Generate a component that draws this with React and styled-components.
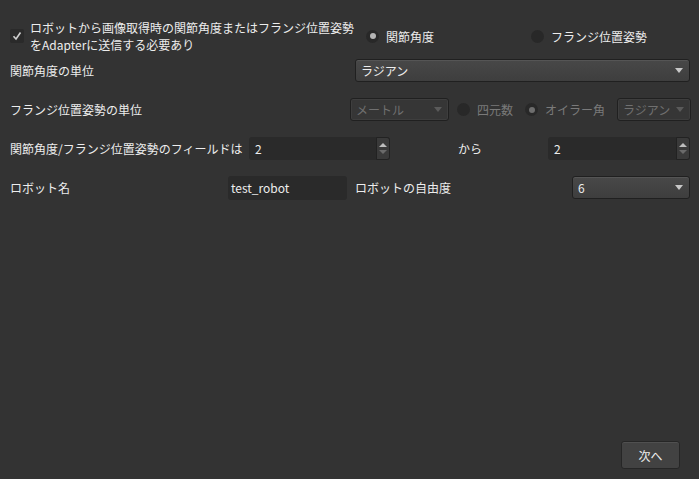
import React from "react";
import styled, { createGlobalStyle } from "styled-components";

const GlobalStyle = createGlobalStyle`
  html, body {
    margin: 0;
    padding: 0;
    background: #333333;
  }
  body {
    font-family: "Noto Sans CJK JP", "Noto Sans", sans-serif;
    font-size: 12px;
    color: #ededed;
  }
`;

const Page = styled.div`
  width: 699px;
  height: 479px;
  box-sizing: border-box;
  padding: 19px 9px 10px 10px;
  display: flex;
  flex-direction: column;
`;

const Row = styled.div`
  display: flex;
  align-items: center;
  height: ${(p) => p.h || 23}px;
  margin-bottom: ${(p) => p.mb || 16}px;
`;

const Label = styled.div`
  width: ${(p) => p.w}px;
  flex: none;
  box-sizing: border-box;
  padding-left: ${(p) => p.pl || 0}px;
  color: ${(p) => (p.disabled ? "#7a7a7a" : "#ededed")};
  white-space: nowrap;
`;

const CheckWrap = styled.div`
  width: 345px;
  flex: none;
  display: flex;
  align-items: center;
  gap: 6px;
`;

const CheckBox = styled.div`
  width: 14px;
  height: 14px;
  flex: none;
  background: #2a2a2a;
  border-radius: 2px;
  display: flex;
  align-items: center;
  justify-content: center;
`;

const CheckText = styled.div`
  line-height: 17px;
`;

const RadioItem = styled.div`
  display: flex;
  align-items: center;
  gap: 7px;
  width: ${(p) => (p.w ? `${p.w}px` : "auto")};
  flex: none;
  margin-left: ${(p) => p.ml || 0}px;
  color: ${(p) => (p.disabled ? "#7a7a7a" : "#ededed")};
  white-space: nowrap;
`;

const RadioDot = styled.div`
  width: 13px;
  height: 13px;
  border-radius: 50%;
  background: #282828;
  display: flex;
  align-items: center;
  justify-content: center;
  &::after {
    content: "";
    width: 6px;
    height: 6px;
    border-radius: 50%;
    background: ${(p) => (p.on ? (p.disabled ? "#6e6e6e" : "#b4b4b4") : "transparent")};
  }
`;

const Combo = styled.div`
  box-sizing: border-box;
  height: 23px;
  width: ${(p) => (p.w ? `${p.w}px` : "auto")};
  flex: ${(p) => (p.w ? "none" : "1")};
  margin-left: ${(p) => p.ml || 0}px;
  border: 1px solid #202020;
  border-radius: 3px;
  background: ${(p) =>
    p.disabled ? "#363636" : "linear-gradient(#484848, #3e3e3e)"};
  box-shadow: ${(p) =>
    p.disabled ? "inset 0 0 0 1px #3e3e3e" : "inset 0 1px 0 #555"};
  display: flex;
  align-items: center;
  justify-content: space-between;
  padding: 0 6px 0 5px;
  color: ${(p) => (p.disabled ? "#707070" : "#ededed")};
`;

const Arrow = styled.span`
  width: 0;
  height: 0;
  border-left: 4px solid transparent;
  border-right: 4px solid transparent;
  border-top: 5px solid ${(p) => (p.disabled ? "#5a5a5a" : "#c8c8c8")};
`;

const Spin = styled.div`
  box-sizing: border-box;
  height: 23px;
  width: ${(p) => p.w}px;
  flex: none;
  background: #2a2a2a;
  border-radius: 3px;
  display: flex;
  align-items: stretch;
  padding-left: 6px;
  color: #ededed;
`;

const SpinValue = styled.div`
  flex: 1;
  display: flex;
  align-items: center;
`;

const SpinButtons = styled.div`
  width: 12px;
  flex: none;
  display: flex;
  flex-direction: column;
  justify-content: center;
  align-items: center;
  gap: 3px;
  background: #3a3a3a;
  border: 1px solid #222;
  border-radius: 0 3px 3px 0;
`;

const Tri = styled.span`
  width: 0;
  height: 0;
  border-left: 4px solid transparent;
  border-right: 4px solid transparent;
  ${(p) =>
    p.up ? "border-bottom: 4px solid #bdbdbd;" : "border-top: 4px solid #6a6a6a;"}
`;

const LineEdit = styled.div`
  box-sizing: border-box;
  height: 24px;
  width: ${(p) => p.w}px;
  flex: none;
  background: #2a2a2a;
  border-radius: 3px;
  display: flex;
  align-items: center;
  padding-left: 3px;
  color: #ededed;
`;

const Spacer = styled.div`
  flex: 1;
`;

const Footer = styled.div`
  display: flex;
  justify-content: flex-end;
  padding-right: 10px;
`;

const Button = styled.button`
  width: 59px;
  height: 28px;
  background: #424242;
  border: 1px solid #262626;
  box-shadow: inset 0 1px 0 #505050;
  border-radius: 3px;
  color: #ededed;
  font-family: inherit;
  font-size: 12px;
  padding: 0;
`;

export default function App() {
  return (
    <>
      <GlobalStyle />
      <Page>
        <Row h={34} mb={6}>
          <CheckWrap>
            <CheckBox>
              <svg width="10" height="10" viewBox="0 0 10 10">
                <path d="M1.5 5.2 L4 8 L8.5 1.5" fill="none" stroke="#cfcfcf" strokeWidth="1.6" />
              </svg>
            </CheckBox>
            <CheckText>
              ロボットから画像取得時の関節角度またはフランジ位置姿勢
              <br />
              をAdapterに送信する必要あり
            </CheckText>
          </CheckWrap>
          <RadioItem w={165} ml={11}>
            <RadioDot on />
            関節角度
          </RadioItem>
          <RadioItem>
            <RadioDot />
            フランジ位置姿勢
          </RadioItem>
        </Row>

        <Row>
          <Label w={345}>関節角度の単位</Label>
          <Combo>
            ラジアン
            <Arrow />
          </Combo>
        </Row>

        <Row>
          <Label w={340}>フランジ位置姿勢の単位</Label>
          <Combo w={99} disabled>
            メートル
            <Arrow disabled />
          </Combo>
          <RadioItem ml={8} disabled>
            <RadioDot />
            四元数
          </RadioItem>
          <RadioItem ml={12} disabled>
            <RadioDot on disabled />
            オイラー角
          </RadioItem>
          <Combo w={74} ml={12} disabled>
            ラジアン
            <Arrow disabled />
          </Combo>
        </Row>

        <Row>
          <Label w={239}>関節角度/フランジ位置姿勢のフィールドは</Label>
          <Spin w={141}>
            <SpinValue>2</SpinValue>
            <SpinButtons>
              <Tri up />
              <Tri />
            </SpinButtons>
          </Spin>
          <Label w={158} pl={68}>
            から
          </Label>
          <Spin w={142}>
            <SpinValue>2</SpinValue>
            <SpinButtons>
              <Tri up />
              <Tri />
            </SpinButtons>
          </Spin>
        </Row>

        <Row>
          <Label w={218}>ロボット名</Label>
          <LineEdit w={119}>test_robot</LineEdit>
          <Label w={225} pl={8}>
            ロボットの自由度
          </Label>
          <Combo>
            6
            <Arrow />
          </Combo>
        </Row>

        <Spacer />
        <Footer>
          <Button>次へ</Button>
        </Footer>
      </Page>
    </>
  );
}
